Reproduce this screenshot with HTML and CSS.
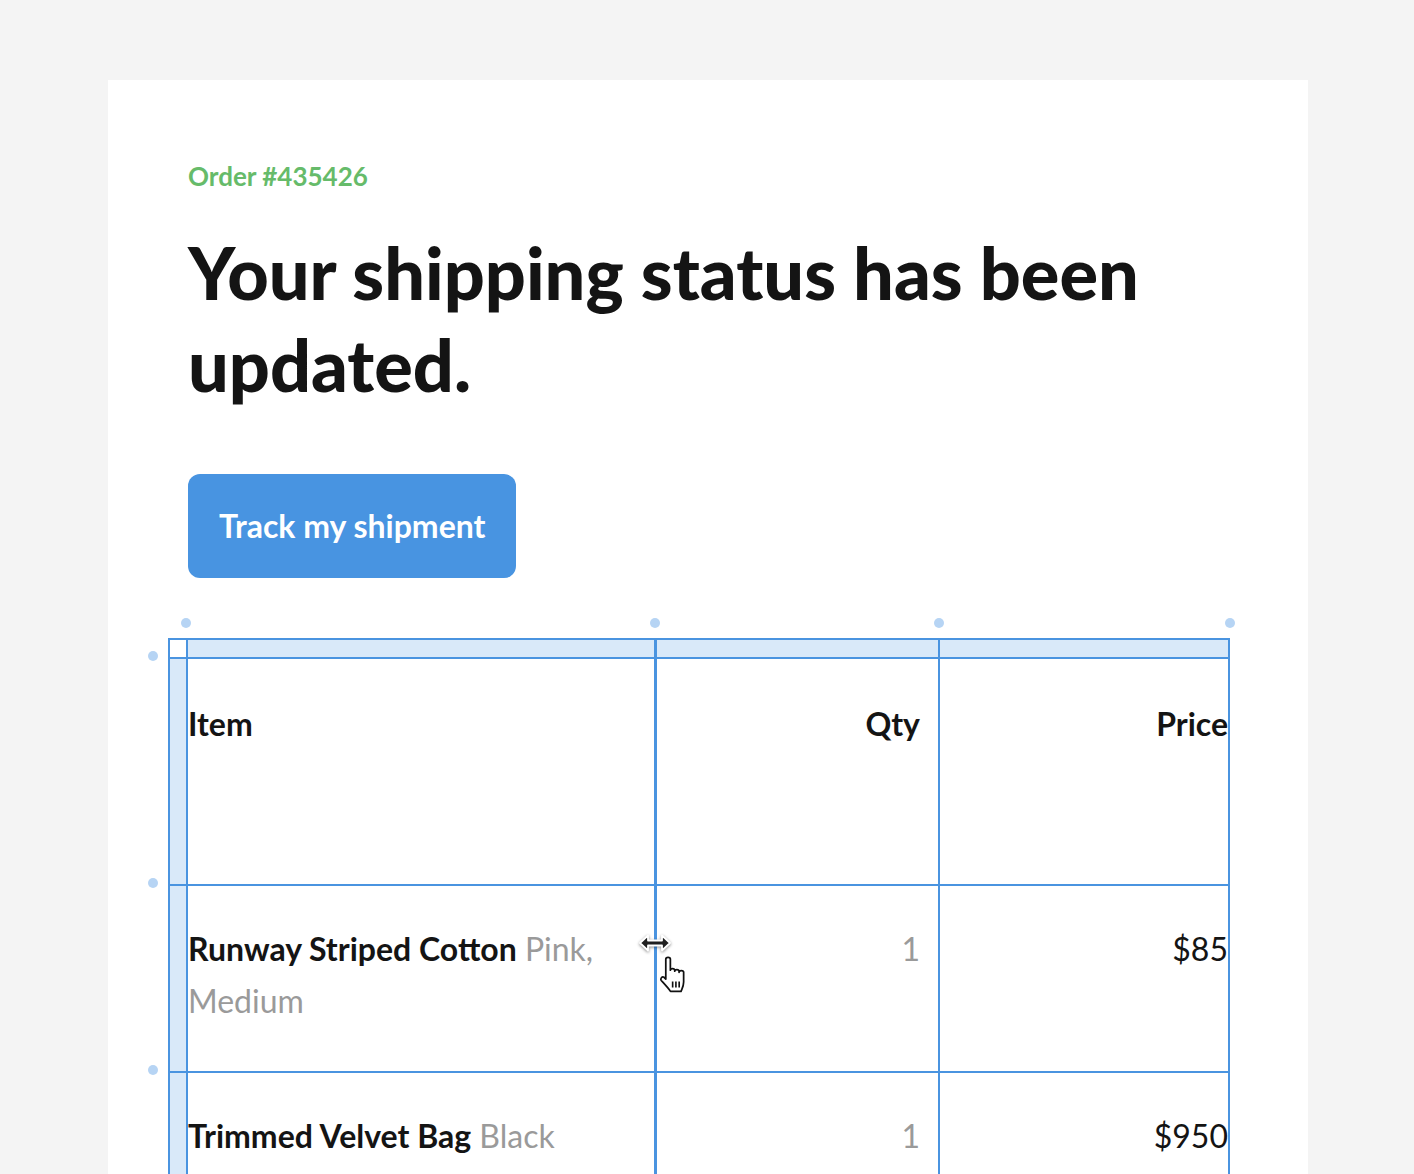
FILE: index.html
```html
<!DOCTYPE html>
<html>
<head>
    <meta charset="utf-8" />
    <title>Shipping update</title>
    <link rel="stylesheet" href="styles.css">
</head>
<body>
    <div id="card">
        <p class="order">Order #435426</p>
        <h1 class="headline">Your shipping status has been updated.</h1>
        <a class="track" href="#track">Track my shipment</a>

        <div class="tablewrap">
            <span class="dot dot-col" style="left: 13px"></span>
            <span class="dot dot-col" style="left: 482px"></span>
            <span class="dot dot-col" style="left: 766px"></span>
            <span class="dot dot-col" style="left: 1057px"></span>
            <span class="dot dot-row" style="top: 13px"></span>
            <span class="dot dot-row" style="top: 240px"></span>
            <span class="dot dot-row" style="top: 427px"></span>

            <table class="items">
                <colgroup>
                    <col class="c-handle" />
                    <col class="c-item" />
                    <col class="c-qty" />
                    <col class="c-price" />
                </colgroup>
                <tr class="handlerow">
                    <td class="corner"></td>
                    <td class="sel"></td>
                    <td></td>
                    <td></td>
                </tr>
                <tr class="head">
                    <td class="handle"></td>
                    <th class="item sel">Item</th>
                    <th class="qty">Qty</th>
                    <th class="price">Price</th>
                </tr>
                <tr class="row">
                    <td class="handle"></td>
                    <td class="item sel"><b>Runway Striped Cotton</b> <span class="variant">Pink, Medium</span></td>
                    <td class="qty">1</td>
                    <td class="price">$85</td>
                </tr>
                <tr class="row">
                    <td class="handle"></td>
                    <td class="item sel"><b>Trimmed Velvet Bag</b> <span class="variant">Black</span></td>
                    <td class="qty">1</td>
                    <td class="price">$950</td>
                </tr>
            </table>

            <div id="cursor">
                <svg class="resize" width="34" height="20" viewBox="-2 -3 34 20">
                    <path d="M0 7 L8 -0.5 L8 4.5 L22 4.5 L22 -0.5 L30 7 L22 14.5 L22 9.5 L8 9.5 L8 14.5 Z" fill="#1e1e1e" stroke="#fff" stroke-width="1.8" stroke-linejoin="round" />
                </svg>
                <svg class="hand" width="31" height="37" viewBox="0 0 28 34">
                    <path d="M6 3 C6 0.8 10.2 0.8 10.2 3 L10.2 13 C10.2 11 14.2 11 14.2 13 L14.2 14 C14.2 12 18.2 12 18.2 14 L18.2 15 C18.2 13 22.4 13 22.4 15 L22.4 24 C22.4 28 21 30 20 32.5 L10.3 32.5 C8.3 29.5 5 26 1.8 22.5 C0.6 20.8 2.6 18.4 4.4 19.6 L6 21.2 Z" fill="#fff" stroke="#111" stroke-width="1.6" stroke-linejoin="round" />
                    <path d="M12.3 23.5 V29 M15.3 23.5 V29 M18.3 23.5 V29" stroke="#111" stroke-width="1.5" />
                </svg>
            </div>
        </div>
    </div>
</body>
</html>
```

FILE: styles.css
```css
*
{
    box-sizing: border-box;
}

body
{
    margin: 0;
    background-color: #f4f4f4;
    font-family: 'Lato', 'Open Sans', sans-serif;
    color: #141414;
}

#card
{
    margin: 80px 0 0 108px;
    width: 1200px;
    height: 1094px;
    padding: 79px 80px 0 80px;
    background-color: #fff;
    overflow: hidden;
}

.order
{
    margin: 0;
    font-size: 26px;
    line-height: 34px;
    font-weight: 700;
    color: #66bb6a;
}

.headline
{
    margin: 33px 0 0 0;
    font-size: 72px;
    line-height: 92px;
    font-weight: 900;
    letter-spacing: 0;
}

.track
{
    display: inline-block;
    margin-top: 64px;
    height: 104px;
    line-height: 104px;
    padding: 0 31px;
    border-radius: 12px;
    background-color: #4894e1;
    color: #fff;
    font-size: 32px;
    font-weight: 700;
    text-decoration: none;
}

.tablewrap
{
    position: relative;
    margin: 60px 0 0 -20px;
}

.dot
{
    position: absolute;
    width: 10px;
    height: 10px;
    border-radius: 50%;
    background-color: #b6d4f4;
}

    .dot-col
    {
        top: -20px;
    }

    .dot-row
    {
        left: -20px;
    }

.items
{
    border-collapse: collapse;
    table-layout: fixed;
    width: 1060px;
    font-size: 32px;
    line-height: 52px;
}

    .items td,
    .items th
    {
        border: 2px solid #4a94e0;
        padding: 37px 0 0 0;
        vertical-align: top;
    }

    .items .sel
    {
        border-right-width: 3px;
    }

.c-handle { width: 18px; }
.c-item { width: 468px; }
.c-qty { width: 284px; }
.c-price { width: 290px; }

.handlerow td
{
    height: 19px;
    padding: 0;
    background-color: #d9e9f9;
}

    .handlerow td.corner
    {
        background-color: #fff;
    }

.items td.handle
{
    padding: 0;
    background-color: #d9e9f9;
}

.head th
{
    height: 227px;
    padding-top: 39px;
    font-weight: 700;
}

.row td
{
    height: 187px;
}

.item
{
    text-align: left;
    padding-right: 30px;
}

    .item b
    {
        font-weight: 700;
    }

.variant
{
    color: #9a9a9a;
}

.qty
{
    text-align: right;
}

    .items .qty
    {
        padding-right: 18px;
    }

    td.qty
    {
        color: #9a9a9a;
    }

.price
{
    text-align: right;
}

#cursor
{
    position: absolute;
    left: 470px;
    top: 295px;
    width: 60px;
    height: 60px;
}

    #cursor .resize
    {
        position: absolute;
        left: 0;
        top: 0;
        filter: drop-shadow(0 1px 1.5px rgba(0, 0, 0, 0.45));
    }

    #cursor .hand
    {
        position: absolute;
        left: 21px;
        top: 23px;
    }
```
